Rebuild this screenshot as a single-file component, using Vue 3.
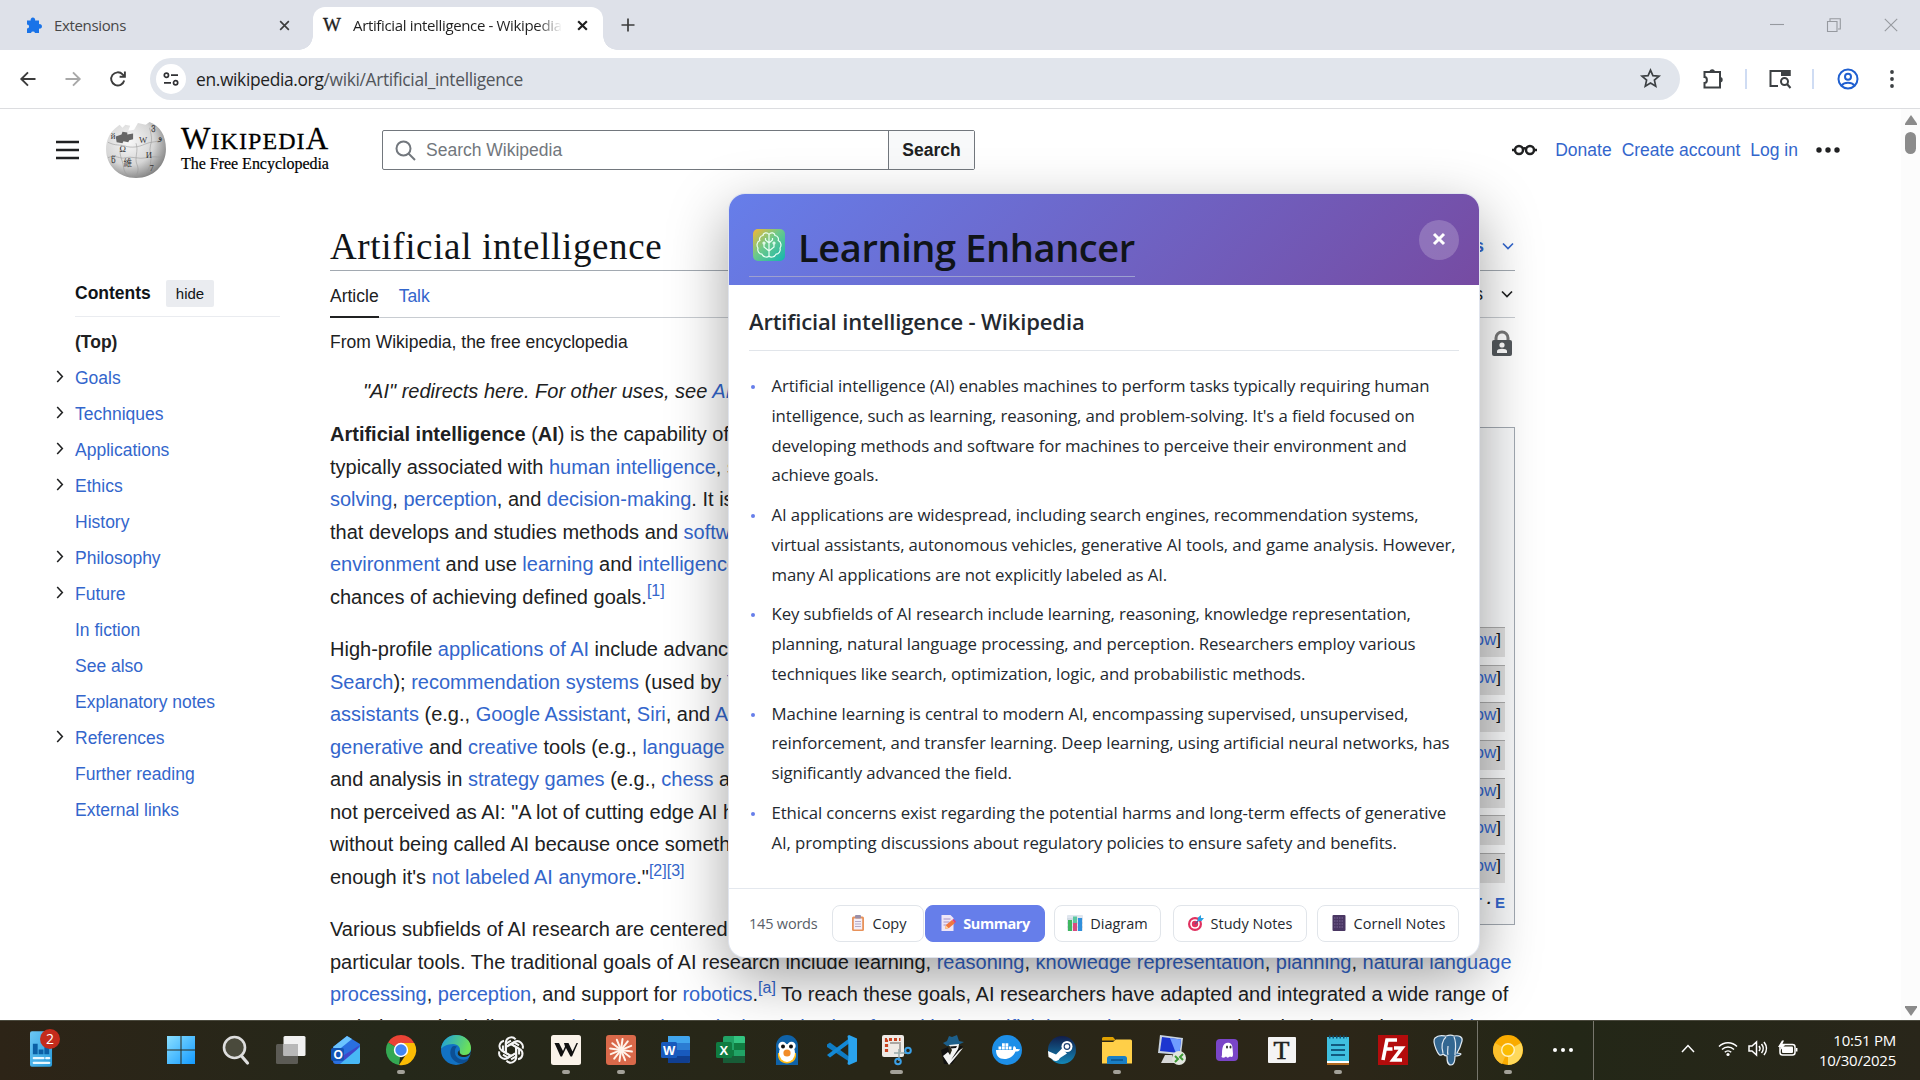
<template>
  <div class="screen">
    <!-- browser tabs -->
    <div class="tabstrip">
      <div class="tab">
        <svg class="tab-icon" viewBox="0 0 18 18"><path fill="#1a73e8" d="M2 4.5h3.7a2.3 2.3 0 1 1 4.4 0H14v3.7a2.3 2.3 0 1 1 0 4.4V17h-4a2.1 2.1 0 0 0-4 0H2v-4.4a2.1 2.1 0 0 0 0-4.2z" /></svg>
        <span class="tab-title">Extensions</span>
        <svg class="tab-x" viewBox="0 0 12 12"><path d="M2 2l8 8M10 2l-8 8" /></svg>
      </div>
      <div class="tab active">
        <span class="tab-w">W</span>
        <span class="tab-title fade">Artificial intelligence - Wikipedia</span>
        <svg class="tab-x bold" viewBox="0 0 12 12"><path d="M2 2l8 8M10 2l-8 8" /></svg>
      </div>
      <svg class="tab-plus" viewBox="0 0 14 14"><path d="M7 .5v13M.5 7h13" /></svg>
      <div class="win-btns">
        <svg viewBox="0 0 14 14"><path d="M0 6.5h14" /></svg>
        <svg viewBox="0 0 14 14"><path d="M.5 3.5h9.5v10H.5zM3 3V.8h10.3V11H11" /></svg>
        <svg viewBox="0 0 14 14"><path d="M.8.8l12.4 12.4M13.2.8L.8 13.2" /></svg>
      </div>
    </div>

    <!-- toolbar -->
    <div class="toolbar">
      <svg class="nav" viewBox="0 0 16 16"><path d="M15.5 8H1.5M8 1.3L1.3 8 8 14.7" /></svg>
      <svg class="nav off" viewBox="0 0 16 16"><path d="M.5 8h14M8 1.3L14.7 8 8 14.7" /></svg>
      <svg class="nav" viewBox="0 0 16 16"><path d="M14.2 9.5A6.6 6.6 0 1 1 12.6 3.4L14.8 5.6M14.9.6v5.2H9.6" /></svg>
      <div class="omnibox">
        <span class="site-info">
          <svg viewBox="0 0 16 14"><circle cx="3.4" cy="3.2" r="2.1" /><path d="M8 3.2h7M1 10.8h7" /><circle cx="12.6" cy="10.8" r="2.1" /></svg>
        </span>
        <span class="url">en.wikipedia.org<i>/wiki/Artificial_intelligence</i></span>
        <svg class="star" viewBox="0 0 20 20"><path d="M10 2l2.3 5.3 5.8.5-4.4 3.8 1.3 5.7-5-3-5 3 1.3-5.7L1.9 7.8l5.8-.5z" /></svg>
      </div>
      <svg class="tool-icon ext" viewBox="0 0 22 22"><path d="M2.5 4H18v15.5H2.5V15c3.2 0 3.2-6 0-6z" /><path class="fill" d="M7.5 4a2.7 2.7 0 0 1 5.4 0zM18 9a2.7 2.7 0 0 1 0 5.4z" /></svg>
      <span class="tool-sep"></span>
      <svg class="tool-icon lens" viewBox="0 0 22 20"><path d="M9 17H1.5V2h19v5" /><path class="fill" d="M12 1h9.5v6H12z" /><circle cx="15.5" cy="12.5" r="3.5" /><path d="M18 15l3.5 4" /></svg>
      <span class="tool-sep"></span>
      <svg class="tool-icon user" viewBox="0 0 22 22"><circle cx="11" cy="11" r="9.5" /><circle cx="11" cy="8.8" r="3" /><path d="M4.5 17.5c3-3.600 10-3.600 13 0" /></svg>
      <svg class="kebab" viewBox="0 0 4 20"><circle cx="2" cy="3" r="1.9" /><circle cx="2" cy="10" r="1.9" /><circle cx="2" cy="17" r="1.9" /></svg>
    </div>

    <!-- wikipedia page -->
    <div class="page">
      <header class="wiki-header">
        <svg class="burger" viewBox="0 0 23 20"><path d="M0 2h23M0 10h23M0 18h23" /></svg>
        <svg class="globe" viewBox="0 0 64 60">
          <defs>
            <radialGradient id="globe" cx=".38" cy=".35" r=".7">
              <stop offset="0" stop-color="#f8f8f8" /><stop offset=".6" stop-color="#d6d6d6" /><stop offset="1" stop-color="#808080" />
            </radialGradient>
          </defs>
          <path fill="url(#globe)" d="M10 8l5-4 3 3 3-3 5 1-2 5 6-1 4-7 8 2 4-3C57 5 63 15 63 29c0 17-13 30-31 30S1 46 1 29C1 20 5 12 10 8z" />
          <path fill="#666" d="M11 16l6-2 1-3 5 1v2l6-1v6l-4 1-1 2-5-1-1 2-6-1z" />
          <path class="seams" d="M3 22c8 4 12 2 18 4s14 1 20-2 14-2 20-5M3 38c8-4 12 2 18 0s14 2 22 0 12 0 17-1M17 25c-4 9 1 14 2 22s4 8 6 11M32 23c3 8-2 15 1 22s-1 9 0 13M46 7c2 8 3 12 1 18s2 12 0 19-3 7-6 12" />
          <g class="glyphs"><text x="15" y="32">Ω</text><text x="35" y="23">W</text><text x="42" y="38">И</text><text x="19" y="47">維</text><text x="6" y="19">й</text><text x="48" y="9">ვ</text><text x="55" y="20">و</text><text x="6" y="43">წ</text><text x="46" y="52">7</text></g>
        </svg>
        <div class="brand">
          <div class="wordmark"><b>W</b>IKIPEDI<b>A</b></div>
          <div class="tagline">The Free Encyclopedia</div>
        </div>
        <div class="search">
          <div class="search-input">
            <svg viewBox="0 0 21 21"><circle cx="8.5" cy="8.5" r="7" /><path d="M13.5 13.5l6.5 6.5" /></svg>
            <span>Search Wikipedia</span>
          </div>
          <button class="search-btn">Search</button>
        </div>
        <nav class="user-nav">
          <svg class="glasses" viewBox="0 0 25 12"><circle cx="7" cy="6" r="4" /><circle cx="18" cy="6" r="4" /><path d="M0 6h3M22 6h3M10.5 5q2-1.500 4 0" /></svg>
          <a>Donate</a><a>Create account</a><a>Log in</a>
          <svg class="more" viewBox="0 0 24 6"><circle cx="3" cy="3" r="2.7" /><circle cx="12" cy="3" r="2.7" /><circle cx="21" cy="3" r="2.7" /></svg>
        </nav>
      </header>

      <div class="wiki-body">
        <aside class="toc">
          <div class="toc-head"><b>Contents</b><span class="hide">hide</span></div>
          <div class="toc-row top">(Top)</div>
          <div v-for="item in toc" :key="item.label" class="toc-row">
            <svg v-if="item.open" class="toc-arrow" viewBox="0 0 8 14"><path d="M1 1l5.500 6L1 13" /></svg>
            <a>{{ item.label }}</a>
          </div>
        </aside>

        <article class="article">
          <div class="title-row">
            <h1>Artificial intelligence</h1>
            <span class="langs">languages <svg viewBox="0 0 12 8"><path d="M1 1.500l5 5 5-5" /></svg></span>
          </div>
          <div class="tabs-row">
            <span class="wtab on">Article</span>
            <a class="wtab">Talk</a>
            <span class="tools">Tools <svg viewBox="0 0 12 8"><path d="M1 1.500l5 5 5-5" /></svg></span>
          </div>
          <div class="sub-row">
            <span>From Wikipedia, the free encyclopedia</span>
            <svg class="lock" viewBox="0 0 20 26"><path fill="none" stroke="#777" stroke-width="3" d="M4 12V8a6 6 0 0 1 12 0v4" /><rect y="10" width="20" height="16" rx="2" fill="#54595d" /><circle cx="10" cy="15" r="2.6" fill="#fff" /><path fill="#fff" d="M5 23v-2c0-3 10-3 10 0v2z" /></svg>
          </div>
          <div class="content">
            <div class="prose">
              <p v-for="(para, i) in paragraphs" :key="i" :class="{ hatnote: i === 0 }">
                <span v-for="(line, j) in para" :key="j" class="line"><component :is="seg.tag" v-for="(seg, k) in parse(line)" :key="k">{{ seg.text }}</component></span>
              </p>
            </div>
            <aside class="infobox">
              <div v-for="n in 7" :key="n" class="show-row">[<a>show</a>]</div>
              <div class="vte"><a>V</a><i>·</i><a>T</a><i>·</i><a>E</a></div>
            </aside>
          </div>
        </article>
      </div>

      <div class="scrollbar">
        <svg viewBox="0 0 12 10"><path d="M6 0l6 8.500V10H0V8.500z" /></svg>
        <span class="thumb"></span>
        <svg class="down" viewBox="0 0 12 10"><path d="M6 10l6-8.500V0H0v1.500z" /></svg>
      </div>
    </div>

    <!-- extension panel -->
    <section class="modal">
      <div class="modal-head">
        <div class="modal-title">
          <svg viewBox="0 0 32 32">
            <defs><linearGradient id="brain" x1="0" y1="0" x2="1" y2="1"><stop offset="0" stop-color="#f7b733" /><stop offset=".45" stop-color="#6cc98a" /><stop offset="1" stop-color="#12b5b0" /></linearGradient></defs>
            <rect width="32" height="32" rx="5" fill="url(#brain)" />
            <g fill="none" stroke="#e9fff4" stroke-width="1.2"><path d="M16 27V5.500C14 2.500 10 4 10 6.500 7 7 6 9.500 6.800 11.500 3.500 13 3.500 17 5 19c-1 3.500 1.500 6 4 6.200 1.500 3.300 5.500 3.600 7 1.800 1.500 1.800 5.500 1.500 7-1.800 2.500-.2 5-2.700 4-6.200 1.500-2 1.500-6-1.800-7.500C26 9.500 25 7 22 6.500 22 4 18 2.500 16 5.500M16 22l-5-4v-3M16 22l5-4v-3M16 14l-3.500-3V9M16 14l3.500-3V9" /><circle cx="11" cy="14" r="1" /><circle cx="21" cy="14" r="1" /></g>
          </svg>
          <h2>Learning Enhancer</h2>
        </div>
        <button class="modal-close"><svg viewBox="0 0 14 14"><path d="M2 2l10 10M12 2L2 12" /></svg></button>
      </div>
      <div class="modal-body">
        <h3>Artificial intelligence - Wikipedia</h3>
        <ul>
          <li v-for="(item, i) in summary" :key="i">
            <span v-for="line in item" :key="line">{{ line }}</span>
          </li>
        </ul>
      </div>
      <div class="modal-foot">
        <span class="words">145 words</span>
        <button v-for="b in actions" :key="b.label" class="act" :class="b.cls">
          <svg viewBox="0 0 16 16" v-html="b.icon"></svg>
          <span>{{ b.label }}</span>
        </button>
      </div>
    </section>

    <!-- windows taskbar -->
    <footer class="taskbar">
      <div class="widget">
        <svg viewBox="0 0 24 38"><defs><linearGradient id="wg" x1="0" y1="0" x2="1" y2="1"><stop offset="0" stop-color="#6cc7f5" /><stop offset="1" stop-color="#279bdb" /></linearGradient></defs><rect y="1" width="23" height="37" rx="2" fill="url(#wg)" /><path fill="#0b5fa5" d="M3 14h5v11H3zM9 20h5v5H9zM15 17h5v8h-5z" /><path stroke="#e8f7ff" stroke-width="2.5" stroke-linecap="round" d="M4 29h10M17 29h3M4 34h16" /></svg>
        <span class="badge">2</span>
      </div>
      <div class="apps">
        <div v-for="app in apps" :key="app.name" class="app" :class="{ wide: app.wide }">
          <svg viewBox="0 0 30 30" v-html="app.svg"></svg>
          <i v-if="app.on"></i>
        </div>
      </div>
      <div class="recent">
        <div class="app">
          <svg viewBox="0 0 30 30"><circle cx="15" cy="15" r="15" fill="#f9ab00" /><path fill="#ffd95a" d="M15 15l13-7a15 15 0 0 1-13 22z" /><path fill="#fbc02d" d="M15 15l-6 14A15 15 0 0 1 2 8z" /><circle cx="15" cy="15" r="7" fill="#fff3c4" /><circle cx="15" cy="15" r="5.6" fill="#fbbc04" /></svg>
          <i></i>
        </div>
        <div class="app"><svg class="dots" viewBox="0 0 22 6"><circle cx="3" cy="3" r="2" /><circle cx="11" cy="3" r="2" /><circle cx="19" cy="3" r="2" /></svg></div>
      </div>
      <div class="tray">
        <svg class="up" viewBox="0 0 14 9"><path d="M1 8l6-6.500L13 8" /></svg>
        <svg class="wifi" viewBox="0 0 20 16"><path d="M1 6a12.500 12.500 0 0 1 18 0M4 9a8.500 8.500 0 0 1 12 0M6.800 11.700a4.600 4.600 0 0 1 6.400 0" /><circle cx="10" cy="14" r="1.6" /></svg>
        <svg class="vol" viewBox="0 0 20 16"><path d="M1 5.500h3L8.500 1.500v13L4 10.500H1zM11 5.500q2 2.500 0 5M13.500 3.500q3.500 4.500 0 9M16 1.500q5 6.500 0 13" /></svg>
        <svg class="bat" viewBox="0 0 20 16"><rect x="2" y="4" width="15" height="10.5" rx="2.5" /><rect class="fill" x="4" y="6" width="11" height="6.5" rx="1" /><path d="M18.700 7.500v3.500" /><path class="bolt" d="M4 0L0 6.500h3L1.500 11 7 4.500H4L6 0z" /></svg>
        <div class="clock"><span>10:51 PM</span><span>10/30/2025</span></div>
      </div>
    </footer>
  </div>
</template>

<script setup>
const toc = [
  { label: 'Goals', open: true },
  { label: 'Techniques', open: true },
  { label: 'Applications', open: true },
  { label: 'Ethics', open: true },
  { label: 'History' },
  { label: 'Philosophy', open: true },
  { label: 'Future', open: true },
  { label: 'In fiction' },
  { label: 'See also' },
  { label: 'Explanatory notes' },
  { label: 'References', open: true },
  { label: 'Further reading' },
  { label: 'External links' }
]

// {link}  *bold*  ^reference^
const paragraphs = [
  ['"AI" redirects here. For other uses, see {AI}'],
  [
    '*Artificial intelligence* (*AI*) is the capability of',
    'typically associated with {human intelligence}, such',
    '{solving}, {perception}, and {decision-making}. It is',
    'that develops and studies methods and {software}',
    '{environment} and use {learning} and {intelligence}',
    'chances of achieving defined goals.^[1]^'
  ],
  [
    'High-profile {applications of AI} include advanced',
    '{Search}); {recommendation systems} (used by {YouTube}',
    '{assistants} (e.g., {Google Assistant}, {Siri}, and {Alexa}',
    '{generative} and {creative} tools (e.g., {language}',
    'and analysis in {strategy games} (e.g., {chess} and',
    'not perceived as AI: "A lot of cutting edge AI has',
    'without being called AI because once something',
    'enough it\'s {not labeled AI anymore}."^[2][3]^'
  ],
  [
    'Various subfields of AI research are centered',
    'particular tools. The traditional goals of AI research include learning, {reasoning}, {knowledge representation}, {planning}, {natural language}',
    '{processing}, {perception}, and support for {robotics}.^[a]^ To reach these goals, AI researchers have adapted and integrated a wide range of',
    'techniques, including {search} and {mathematical optimization}, {formal logic}, {artificial neural networks}, and methods based on {statistics},'
  ]
]

function parse(line) {
  const tags = { '{': 'a', '*': 'b', '^': 'sup' }
  return line
    .split(/(\{[^}]*\}|\*[^*]*\*|\^[^^]*\^)/)
    .filter(Boolean)
    .map(s => (tags[s[0]] ? { tag: tags[s[0]], text: s.slice(1, -1) } : { tag: 'span', text: s }))
}

const summary = [
  [
    'Artificial intelligence (AI) enables machines to perform tasks typically requiring human',
    "intelligence, such as learning, reasoning, and problem-solving. It's a field focused on",
    'developing methods and software for machines to perceive their environment and',
    'achieve goals.'
  ],
  [
    'AI applications are widespread, including search engines, recommendation systems,',
    'virtual assistants, autonomous vehicles, generative AI tools, and game analysis. However,',
    'many AI applications are not explicitly labeled as AI.'
  ],
  [
    'Key subfields of AI research include learning, reasoning, knowledge representation,',
    'planning, natural language processing, and perception. Researchers employ various',
    'techniques like search, optimization, logic, and probabilistic methods.'
  ],
  [
    'Machine learning is central to modern AI, encompassing supervised, unsupervised,',
    'reinforcement, and transfer learning. Deep learning, using artificial neural networks, has',
    'significantly advanced the field.'
  ],
  [
    'Ethical concerns exist regarding the potential harms and long-term effects of generative',
    'AI, prompting discussions about regulatory policies to ensure safety and benefits.'
  ]
]

const actions = [
  { label: 'Copy', cls: 'copy', icon: '<rect x="2" y="1.5" width="12" height="14.5" rx="1.5" fill="#e8925a"/><rect x="3.8" y="3.5" width="8.4" height="11" fill="#f3eef8"/><rect x="5" y="0" width="6" height="3.6" rx="1" fill="#9a8fa8"/><path d="M5 6.500h6M5 9h6M5 11.500h6" stroke="#b5a9c4"/>' },
  { label: 'Summary', cls: 'summary', icon: '<path d="M1.500 0h9l3 3v13h-12z" fill="#efe6f7"/><path d="M3.500 4h7M3.500 7h6M3.500 10h4" stroke="#a892c4"/><path d="M5 14l1-4 6-5 3 3-6 5z" fill="#f2763f"/><path d="M5 14l1-3.500 2.500 2.500z" fill="#ffd39a"/><path d="M12 5l1.500-1 2.500 2.500-1 1.500z" fill="#e0407b"/>' },
  { label: 'Diagram', cls: 'diagram', icon: '<rect width="16" height="16" rx="1" fill="#dfe6ee"/><path d="M0 4h16M0 8h16M0 12h16" stroke="#b6c2d0" stroke-width=".6"/><rect x="1" y="5" width="4" height="11" fill="#3fb65f"/><rect x="6" y="1.500" width="4" height="14.500" fill="#5cc7a0"/><rect x="6" y="8" width="4" height="8" fill="#d84a7e"/><rect x="11" y="3" width="4" height="13" fill="#2f8fdb"/>' },
  { label: 'Study Notes', cls: 'study', icon: '<circle cx="7" cy="9" r="7" fill="#e0305f"/><circle cx="7" cy="9" r="4.8" fill="#fff"/><circle cx="7" cy="9" r="3.2" fill="#e0305f"/><path d="M7 9l6-6" stroke="#6b4b8a" stroke-width="1.3"/><path d="M9.500 6l.5-3.500L13 0v3h3l-2.500 3z" fill="#2a9fe0"/>' },
  { label: 'Cornell Notes', cls: 'cornell', icon: '<rect x="1.5" width="13" height="16" rx="1" fill="#4a3763"/><path d="M3 3h10M3 6h10M3 9h10M3 12h10" stroke="#7a6696" stroke-dasharray="1.5 1"/>' }
]

const spin = (angles, shape) => angles.map(a => `<g transform="rotate(${a} 15 15)">${shape}</g>`).join('')

const apps = [
  { name: 'start', svg: '<defs><linearGradient id="st" x1="0" y1="0" x2="1" y2="1"><stop offset="0" stop-color="#8be0ff"/><stop offset="1" stop-color="#139aff"/></linearGradient></defs><path fill="url(#st)" d="M1 1h13.500v13.500H1zM15.500 1H29v13.500H15.500zM1 15.500h13.500V29H1zM15.500 15.500H29V29H15.500z"/>' },
  { name: 'search', svg: '<circle cx="13.500" cy="12.500" r="10.500" fill="#4a4a3c" stroke="#dedede" stroke-width="2.600"/><path d="M20.500 21l6 7" stroke="#dedede" stroke-width="3.200" stroke-linecap="round"/>' },
  { name: 'taskview', svg: '<rect x="0" y="9" width="22" height="20" rx="1.500" fill="#5c5b55"/><rect x="7.500" y="1" width="22" height="20" rx="1.500" fill="#f1f1f1"/><path fill="#b8b8b8" d="M7.500 9H22v12H7.500z"/>' },
  { name: 'outlook', svg: '<path fill="#2a6fe0" d="M2 12L16 1l13 8v17a3 3 0 0 1-3 3H5a3 3 0 0 1-3-3z"/><path fill="#6bc4ff" d="M2 12L16 1l5 3L5 17z"/><path fill="#3f46c9" d="M29 10L10 22l6 7z"/><path fill="#48b8f5" d="M29 12v15a2 2 0 0 1-2 2H9z"/><rect x="0" y="13" width="13" height="13" rx="2" fill="#1253b5"/><text x="2.500" y="24" font-size="12" font-weight="700" font-family="Liberation Sans" fill="#fff">O</text>' },
  { name: 'chrome', on: true, svg: '<path fill="#ea4335" d="M15 15L2 7.500a15 15 0 0 1 26 0z"/><path fill="#34a853" d="M15 15l-2 15A15 15 0 0 1 2 7.500z"/><path fill="#fbbc04" d="M15 8h13.300A15 15 0 0 1 13 30l8-12z"/><circle cx="15" cy="15" r="7.200" fill="#fff"/><circle cx="15" cy="15" r="5.700" fill="#4285f4"/>' },
  { name: 'edge', svg: '<defs><linearGradient id="eg" x1="0" y1="0" x2="1" y2=".3"><stop offset="0" stop-color="#1b9de2"/><stop offset="1" stop-color="#6be05a"/></linearGradient></defs><circle cx="15" cy="15" r="15" fill="#1272c4"/><path fill="url(#eg)" d="M0 14C1 5 8 0 15 0c9 0 15 6 15 13 0 5-4 8-8 8-3 0-5-1-4-3 3-5-1-9-6-9C6 9 1 12 0 14z"/><path fill="#0c4f94" d="M11 12c-5 8 2 17 11 16.500 3-1 5-3 6-5-7 3-15 0-14-8 0-2 1-3 2-4-2-1-4-.5-5 .5z"/><path fill="#272818" d="M30.500 16c-1 4-4 6-8.500 6-5 0-7-4-3.500-7 0 3 1 5 5 5 3 0 5-1 7-4z"/>' },
  { name: 'chatgpt', svg: '<g fill="none" stroke="#f5f5f5" stroke-width="2">' + spin([0, 60, 120, 180, 240, 300], '<path d="M9.800 18V7.500a5.600 5.600 0 0 1 9.800-3.200M10 12l8-4.600 5 2.900"/>') + '</g>' },
  { name: 'w', on: true, svg: '<rect width="30" height="30" rx="2.500" fill="#faf3ea"/><path fill="#111" d="M3.500 8H8l4 8 2-4.500L13 8h4.500l4 8.500L25.500 8H27l-6 13.500h-1.500L15 13l-4 8.500H9.500z"/>' },
  { name: 'claude', on: true, svg: '<rect width="30" height="30" rx="3" fill="#d9694a"/><g stroke="#fff4ea" stroke-width="2" stroke-linecap="round">' + spin([8, 38, 68, 98, 128, 158], '<path d="M15 4v22"/>') + '</g>' },
  { name: 'word', svg: '<rect x="7" y="1" width="22" height="27" rx="2" fill="#2b7cd3"/><path fill="#41a5ee" d="M7 1h20a2 2 0 0 1 2 2v5H7z"/><path fill="#185abd" d="M7 15h22v6H7z"/><path fill="#103f91" d="M7 21h22v5a2 2 0 0 1-2 2H7z"/><rect x="0" y="7" width="16" height="16" rx="1.500" fill="#185abd"/><text x="2" y="19.500" font-size="13" font-weight="700" font-family="Liberation Sans" fill="#fff">W</text>' },
  { name: 'excel', svg: '<rect x="7" y="1" width="22" height="27" rx="2" fill="#21a366"/><path fill="#33c481" d="M18 1h9a2 2 0 0 1 2 2v5H18z"/><path fill="#107c41" d="M7 15h11v6H7zM18 8h11v7H18z"/><path fill="#185c37" d="M7 21h22v5a2 2 0 0 1-2 2H7z"/><rect x="0" y="7" width="16" height="16" rx="1.500" fill="#107c41"/><text x="3.500" y="19.500" font-size="13" font-weight="700" font-family="Liberation Sans" fill="#fff">X</text>' },
  { name: 'penguin', svg: '<path fill="#0f62a8" d="M4 30V11a11 11 0 0 1 22 0v19z"/><path fill="#fdb913" d="M6 18h18c2 14-20 14-18 0z"/><ellipse cx="15" cy="18" rx="8" ry="9" fill="#fff"/><circle cx="10.500" cy="11" r="4.200" fill="#fff"/><circle cx="19.500" cy="11" r="4.200" fill="#fff"/><circle cx="11" cy="11.500" r="2" fill="#111"/><circle cx="19" cy="11.500" r="2" fill="#111"/><circle cx="15" cy="18" r="3.600" fill="#f28c28"/>' },
  { name: 'vscode', svg: '<path fill="#0f7cc4" d="M0 9.500l3-2 19 14v5L0 12z"/><path fill="#1389d6" d="M0 20l3 2.500 19-14V3.500z"/><path fill="#2aa3ee" d="M22 0l8 3.500v23L22 30l-1.500-1 .8-5.500V6.500L20.500 1z"/>' },
  { name: 'snip', on: true, wide: true, svg: '<rect x="0" y="0" width="22" height="22" rx="2" fill="#eeeae6"/><path fill="none" stroke="#c9431f" stroke-width="3.200" stroke-dasharray="3 2" d="M4.500 17V4.500h14"/><path fill="none" stroke="#aaa6a2" stroke-width="2" d="M8 8h10v9"/><path d="M12 18h13M17 14v12" stroke="#9aa" stroke-width="1.500"/><circle cx="26" cy="15.500" r="2.800" fill="none" stroke="#3aa0e8" stroke-width="2"/><circle cx="16" cy="26.500" r="2.800" fill="none" stroke="#3aa0e8" stroke-width="2"/>' },
  { name: 'agent', svg: '<path fill="#111" d="M4 15l7-3 2 8 7 2-5 7H7z"/><path fill="#1d5f8a" d="M10 6l2-5 3 1 5-2 2 6 5 1-6 3-11 1-4-3z"/><path fill="#f4f4f4" d="M12 10l10-1-1 7 5-3-8 10-6 7-6-9 5-4 2 3 2-5z"/><path fill="#111" d="M13 11.500l7-.5-1 2-5 .5zM26 11l-12 14 9-14z"/>' },
  { name: 'docker', svg: '<circle cx="15" cy="15" r="15" fill="#1d8fe8"/><path fill="#fff" d="M4 15h17c0-2 0-3 1-4 2 1 2 2 2 3 1-.3 3 0 4 .5-1 2-3 2-4.500 2C21 22 17 24 12.500 24 7 24 4 21 4 15z"/><path stroke="#fff" stroke-width="3" stroke-dasharray="2.800 .7" d="M6.500 13h13M10 9.700h7"/>' },
  { name: 'steam', svg: '<defs><linearGradient id="sm" x1="0" y1="0" x2="0" y2="1"><stop offset="0" stop-color="#111d4a"/><stop offset="1" stop-color="#1387b8"/></linearGradient></defs><circle cx="15" cy="15" r="14" fill="url(#sm)"/><path fill="#fff" d="M1 16l8 3.500 6-6 5 5-7 4.500a4.500 4.500 0 0 1-8 1L1.500 22z"/><circle cx="20" cy="11.500" r="5.500" fill="#fff"/><circle cx="20" cy="11.500" r="3.400" fill="#1b3f70"/><circle cx="20" cy="11.500" r="2.200" fill="#fff"/>' },
  { name: 'explorer', on: true, svg: '<path fill="#e0a100" d="M0 3.500A1.500 1.500 0 0 1 1.500 2H11l3 3.500H0z"/><path fill="#ffcf48" d="M0 7h11l3-2.500h14.500A1.500 1.500 0 0 1 30 6v22.500H0z"/><path fill="#1a7fc4" d="M5 29v-5.500A2.500 2.500 0 0 1 7.500 21h15a2.500 2.500 0 0 1 2.500 2.500V29z"/><path d="M9 25h12" stroke="#0d5a95" stroke-width="1.800"/>' },
  { name: 'rdp', svg: '<path fill="#c9d3e0" d="M3 0l23 3-2 17L1 18z"/><path fill="#1c35d0" d="M5 2l19 2.500-1.500 13.500L3 16z"/><path fill="#6f9cff" d="M13 3l11 1.500L22.500 18l-4-1z"/><path fill="#d8d8d8" d="M8 20h7l1 4 3 4H4z"/><circle cx="22" cy="23" r="7" fill="#e2e6df"/><path fill="none" stroke="#3f9a35" stroke-width="2" d="M18 21l3 3-3 3M26 19l-3 3 3 3"/>' },
  { name: 'ghost', svg: '<rect x="4" y="4" width="22" height="22" rx="4" fill="#7a45c8"/><path fill="#fff" d="M9.500 22c1-2 0-5 1-9 1-7 10-7 10 0l.5 6c0 4-2 3-3 2.500-2 1.500-3 1.500-4 0-2 1.500-3 1.500-4.500.5z"/><ellipse cx="15" cy="12" rx="1" ry="1.600" fill="#333"/><ellipse cx="18.500" cy="12" rx="1" ry="1.600" fill="#333"/>' },
  { name: 'typora', svg: '<rect x="1" y="2" width="28" height="26" rx="1" fill="#f4f4f4"/><text x="6.500" y="24" font-size="26" font-family="Liberation Serif" fill="#222" stroke="#222" stroke-width=".6">T</text>' },
  { name: 'notepad', on: true, svg: '<rect x="4" y="2" width="22" height="26" fill="#3fbfe0"/><path fill="#fff" d="M4 26h22v2H4z"/><path fill="#b26a20" d="M4 28h22v2H4z"/><path stroke="#125a80" stroke-width="2" d="M8 10h14M8 15h14M8 20h14"/><path stroke="#0d4f73" stroke-width="3" stroke-dasharray="1.500 2" d="M6 2h18"/>' },
  { name: 'filezilla', svg: '<rect x="0" y="0" width="30" height="30" fill="#b30c0c"/><path d="M5 25L9 5h10M7.500 14h7M16 13h8l-9 12h9" fill="none" stroke="#fff" stroke-width="3.600"/>' },
  { name: 'postgres', svg: '<path fill="#336791" stroke="#dfe8f0" stroke-width="1.200" d="M2 3C6-1 11 1 13 1c3-1 6-1 8 0 5-1 9 1 8 5s-3 9-5 12c3 0 4 0 4 1-1 2-4 2-6 2 0 5-1 9-4 9-4 0-4-5-4-9-2 0-3-1-4-2-3 3-5 0-7-5S0 5 2 3z"/><path fill="none" stroke="#dfe8f0" stroke-width="1.200" d="M10 18c-2-6-1-13 3-16M22 20c0-4 2-12-1-18M15 20c-1-3 0-6 0-9"/>' }
]
</script>

<style>
body { background: #fff; overflow: hidden; }
</style>

<style scoped>
* { box-sizing: border-box; }
.screen {
  position: relative; width: 1920px; height: 1080px; overflow: hidden;
  display: flex; flex-direction: column; background: #fff; color: #202122;
  font-family: "Liberation Sans", Arial, sans-serif;
}
svg { display: block; flex: none; overflow: visible; }
button { border: 0; background: none; padding: 0; font: inherit; color: inherit; }
a { color: #36c; }

/* tabs */
.tabstrip { display: flex; height: 50px; background: #dee1e9; font-family: "Open Sans", "Noto Sans", sans-serif; }
.tab { display: flex; align-items: center; width: 313px; padding: 0 22px 0 25px; height: 50px; font-size: 15px; color: #474747; }
.tab-icon { width: 18px; height: 18px; margin-right: 11px; }
.tab-title { flex: 1; letter-spacing: -0.35px; white-space: nowrap; overflow: hidden; }
.tab-x { width: 13px; height: 13px; fill: none; stroke: #3c3c3c; stroke-width: 1.5; }
.tab-x.bold { stroke-width: 2; stroke: #1f1f1f; }
.tab.active {
  position: relative; width: 290px; height: 43px; margin-top: 7px; padding: 0 14px 7px 10px; background: #fff;
  border-radius: 12px 12px 0 0; color: #1f1f1f;
}
.tab.active::before, .tab.active::after { content: ''; position: absolute; bottom: 0; width: 14px; height: 14px; }
.tab.active::before { left: -14px; background: radial-gradient(circle at 0 0, transparent 13.5px, #fff 14px); }
.tab.active::after { right: -14px; background: radial-gradient(circle at 100% 0, transparent 13.5px, #fff 14px); }
.tab-w { font: 19px "Liberation Serif", serif; width: 30px; -webkit-text-stroke: 0.4px #1f1f1f; }
.fade { margin-right: 14px; -webkit-mask-image: linear-gradient(90deg, #000 88%, transparent); mask-image: linear-gradient(90deg, #000 88%, transparent); }
.tab-plus { width: 14px; height: 14px; margin: 18px 0 0 18px; fill: none; stroke: #3c3c3c; stroke-width: 1.7; }
.win-btns { display: flex; gap: 43px; margin: 18px 22px 0 auto; }
.win-btns svg { width: 14px; height: 14px; fill: none; stroke: #96999f; stroke-width: 1.1; }

/* toolbar */
.toolbar { display: flex; align-items: center; height: 59px; padding: 0 26px 1px 20px; border-bottom: 1px solid #dcdde0; background: #fff; }
.nav { width: 16px; height: 16px; margin-right: 29px; fill: none; stroke: #3c3c3c; stroke-width: 1.9; }
.nav.off { stroke: #a8a8a8; }
.nav:nth-child(3) { margin-right: 24px; }
.omnibox { display: flex; align-items: center; width: 1530px; height: 42px; border-radius: 21px; background: #e1e5ec; padding: 0 19px 0 6px; }
.site-info { width: 30px; height: 30px; border-radius: 50%; background: #fff; display: grid; place-items: center; }
.site-info svg { width: 16px; height: 14px; fill: none; stroke: #303134; stroke-width: 1.7; }
.url { flex: 1; margin-left: 10px; padding-top: 1px; font: 17.4px "Open Sans", "Noto Sans", sans-serif; letter-spacing: -0.35px; color: #1f1f1f; }
.url i { font-style: normal; color: #51555b; }
.star { width: 21px; height: 21px; fill: none; stroke: #3c4043; stroke-width: 1.6; }
.tool-icon { width: 22px; height: 22px; fill: none; stroke: #3c4043; stroke-width: 2; }
.tool-icon .fill { fill: #3c4043; stroke: none; }
.ext { margin-left: 22px; }
.tool-sep { width: 2px; height: 20px; margin-left: 21px; background: #cfdcf3; }
.lens { height: 20px; margin-left: 22px; }
.user { margin-left: 23px; stroke: #1f5fd0; }
.kebab { width: 4px; height: 20px; margin-left: auto; fill: #3c4043; }

/* wiki header */
.page { position: relative; height: 911px; overflow: hidden; }
.wiki-header { display: flex; align-items: center; height: 82px; padding-left: 56px; font-size: 17.5px; }
.burger { width: 23px; height: 20px; stroke: #202122; stroke-width: 2.6; }
.globe { width: 62px; height: 58px; margin-left: 26px; }
.globe .seams { fill: none; stroke: #999; stroke-width: .6; }
.glyphs { font: 9px "Liberation Serif", "Noto Sans CJK SC", serif; fill: #333; }
.brand { width: 150px; margin: 0 0 0 14px; font-family: "Liberation Serif", serif; color: #000; white-space: nowrap; }
.wordmark { font-size: 24px; line-height: 27px; letter-spacing: 1.1px; margin-top: -3px; -webkit-text-stroke: 0.3px #000; }
.wordmark b { font-weight: 400; font-size: 31px; }
.tagline { font-size: 16px; line-height: 18px; letter-spacing: -0.02px; -webkit-text-stroke: 0.2px #000; }
.search { display: flex; width: 593px; height: 40px; margin-left: 51px; border: 1px solid #72777d; border-radius: 2px; }
.search-input { display: flex; align-items: center; width: 506px; padding-left: 12px; border-right: 1px solid #72777d; color: #72777d; }
.search-input svg { width: 21px; height: 21px; margin-right: 10px; fill: none; stroke: #72777d; stroke-width: 2; }
.search-btn { flex: 1; background: #f8f9fa; font-weight: bold; }
.user-nav { display: flex; align-items: center; margin-left: auto; padding-right: 80px; gap: 10px; }
.glasses { width: 25px; height: 12px; margin-right: 8px; fill: none; stroke: #202122; stroke-width: 2.5; }
.more { width: 24px; height: 6px; margin-left: 8px; fill: #202122; }

/* contents */
.wiki-body { display: flex; }
.toc { width: 280px; margin-right: 50px; padding: 88px 0 0 75px; font-size: 17.5px; }
.toc-head { display: flex; align-items: center; gap: 15px; height: 38px; padding-bottom: 9px; border-bottom: 1px solid #eaecf0; color: #101418; }
.toc-head b { padding-top: 1px; }
.hide { height: 27px; line-height: 27px; padding: 0 10px; font-size: 15px; background: #eaecf0; border-radius: 2px; }
.toc-row { display: flex; align-items: center; height: 36px; }
.toc-row.top { margin-top: 7px; font-weight: bold; }
.toc-arrow { width: 8px; height: 13px; margin: -3px 11px 0 -19px; fill: none; stroke: #202122; stroke-width: 1.7; }

/* article */
.article { width: 1185px; }
.title-row { display: flex; justify-content: space-between; height: 80px; border-bottom: 1px solid #a2a9b1; font-size: 17.5px; }
h1 { margin: 33px 0 0; font: 37px/46px "Liberation Serif", serif; letter-spacing: 0.65px; color: #101418; white-space: nowrap; }
.langs, .tools { display: flex; align-items: center; gap: 18px; padding-right: 1px; }
.langs { height: 20px; margin-top: 45px; color: #36c; font-weight: bold; }
.langs svg, .tools svg { width: 12px; height: 8px; fill: none; stroke: currentColor; stroke-width: 1.7; }
.tabs-row { display: flex; gap: 20px; height: 47px; border-bottom: 1px solid #c8ccd1; font-size: 17.5px; line-height: 51px; }
.wtab.on { height: 47px; border-bottom: 2px solid #202122; }
.tools { margin-left: auto; padding-right: 2px; }
.sub-row { display: flex; align-items: center; justify-content: space-between; height: 48px; padding-right: 3px; font-size: 17.5px; }
.lock { width: 20px; height: 26px; margin-top: 2px; }
.content { display: grid; padding-top: 9.3px; }
.prose, .infobox { grid-area: 1 / 1; }
p { margin: 0 0 20px; font-size: 20px; }
p.hatnote { margin: 0 0 10.5px 33px; font-style: italic; }
.line { display: block; height: 32.5px; line-height: 32.5px; white-space: nowrap; }
sup { font-size: 16px; line-height: 1; color: #36c; vertical-align: super; }
.infobox {
  justify-self: end; width: 120px; height: 498px; margin-top: 52px; padding: 199px 9px 0;
  display: flex; flex-direction: column; gap: 7.6px; border: 1px solid #a2a9b1; background: #f8f9fa; font-size: 17px; color: #101418;
}
.show-row { height: 30px; line-height: 24px; padding-right: 4px; text-align: right; background: #ddd; border-top: 1px solid #aaa; }
.vte { display: flex; justify-content: flex-end; gap: 4px; font-size: 15px; font-weight: bold; margin-top: 4px; }

.scrollbar {
  position: absolute; top: 0; right: 0; width: 19px; height: 911px; padding: 6px 0 4px;
  display: flex; flex-direction: column; align-items: center; background: #fcfcfc;
}
.scrollbar svg { width: 12px; height: 10px; fill: #8b8b8b; }
.scrollbar .down { margin-top: auto; }
.thumb { width: 11px; height: 22px; margin-top: 7px; border-radius: 6px; background: #8b8b8b; }

/* panel */
.modal {
  position: absolute; left: 729px; top: 194px; width: 750px; height: 763px; overflow: hidden;
  display: flex; flex-direction: column; background: #fff; border-radius: 16px;
  font-family: "Open Sans", "Noto Sans", sans-serif; color: #24292f;
  box-shadow: 0 0 0 1px #e1e5ee, 0 20px 60px rgba(0, 0, 0, 0.38);
}
.modal-head { display: flex; justify-content: space-between; height: 91px; padding: 26px 20px 0; background: linear-gradient(135deg, #667eea 0%, #764ba2 100%); }
.modal-title { display: flex; height: 57px; padding-left: 4px; border-bottom: 1px solid #9da0d0; }
.modal-title svg { width: 32px; height: 32px; margin-top: 9px; margin-right: 13px; }
h2 { margin: 0; font-size: 38px; line-height: 54px; font-weight: 600; color: #101418; letter-spacing: -0.4px; white-space: nowrap; }
.modal-close { width: 40px; height: 40px; border-radius: 50%; background: rgba(255, 255, 255, 0.2); display: grid; place-items: center; }
.modal-close svg { width: 14px; height: 14px; margin-top: -2px; fill: none; stroke: #fff; stroke-width: 3; }
.modal-body { flex: 1; padding: 0 20px; }
h3 { margin: 0; height: 66px; padding-top: 21px; line-height: 30px; font-size: 22px; font-weight: 600; letter-spacing: -0.13px; border-bottom: 1px solid #e1e5ea; white-space: nowrap; }
ul { margin: 20px 0 0; padding: 0 0 0 22.5px; list-style: none; font-size: 16.8px; letter-spacing: -0.12px; }
li { position: relative; margin-bottom: 10px; }
li::before { content: ''; position: absolute; left: -21px; top: 14px; width: 4px; height: 4px; border-radius: 50%; background: #667eea; }
li span { display: block; height: 29.75px; line-height: 30px; white-space: nowrap; }
.modal-foot { display: flex; align-items: center; height: 69px; padding: 0 20px 0; border-top: 1px solid #e4e8ee; font-size: 14.5px; letter-spacing: -0.2px; white-space: nowrap; }
.words { width: 83px; font-weight: 500; color: #586069; }
.act { display: flex; align-items: center; justify-content: center; gap: 7px; height: 37px; border: 1px solid #e1e5ea; border-radius: 8px; background: #fff; }
.act svg { width: 16px; height: 16px; }
.copy { width: 92px; }
.summary { width: 120px; margin-left: 1px; background: #667eea; border-color: #667eea; color: #fff; font-weight: 700; letter-spacing: -0.45px; }
.diagram { width: 107px; margin-left: 9px; }
.study { width: 134px; margin-left: 12px; }
.cornell { width: 142px; margin-left: auto; }

/* taskbar */
.taskbar {
  position: relative; display: flex; height: 60px; border-top: 1px solid #4a493d;
  background: linear-gradient(90deg, #2d2417 0%, #25281a 20%, #282617 45%, #2c2618 70%, #232717 82%, #29261a 100%);
}
.widget { position: relative; width: 153px; padding: 8px 0 0 30px; }
.widget svg { width: 23px; height: 37px; margin-top: 1px; }
.badge { position: absolute; left: 40px; top: 8px; width: 20px; height: 20px; border-radius: 50%; background: #c42b1c; color: #fff; font: 14px/20px "Open Sans", sans-serif; text-align: center; }
.apps { display: flex; }
.app { width: 55.1px; display: flex; flex-direction: column; align-items: center; padding-top: 14px; }
.app svg { width: 30px; height: 30px; }
.app i { width: 8px; height: 4px; margin-top: 5px; border-radius: 2px; background: #a3a199; }
.app.wide i { width: 13px; }
.recent { display: flex; width: 117px; margin-left: 2px; padding-left: 2px; border-left: 1px solid #77766c; border-right: 1px solid #77766c; }
.app .dots { width: 22px; height: 6px; margin-top: 12px; fill: #fff; }
.tray { display: flex; align-items: center; margin-left: auto; padding-right: 24px; }
.tray svg { fill: none; stroke: #fff; stroke-width: 1.5; margin-top: -4px; }
.up { width: 14px; height: 9px; margin-right: 23px; }
.wifi, .vol, .bat { width: 20px; height: 17px; margin-right: 10px; }
.wifi circle, .bat .fill, .bat .bolt { fill: #fff; stroke: none; }
.clock { width: 88px; margin-top: -2px; display: flex; flex-direction: column; text-align: right; color: #fff; font: 15px/20px "Open Sans", sans-serif; letter-spacing: -0.25px; }
</style>
